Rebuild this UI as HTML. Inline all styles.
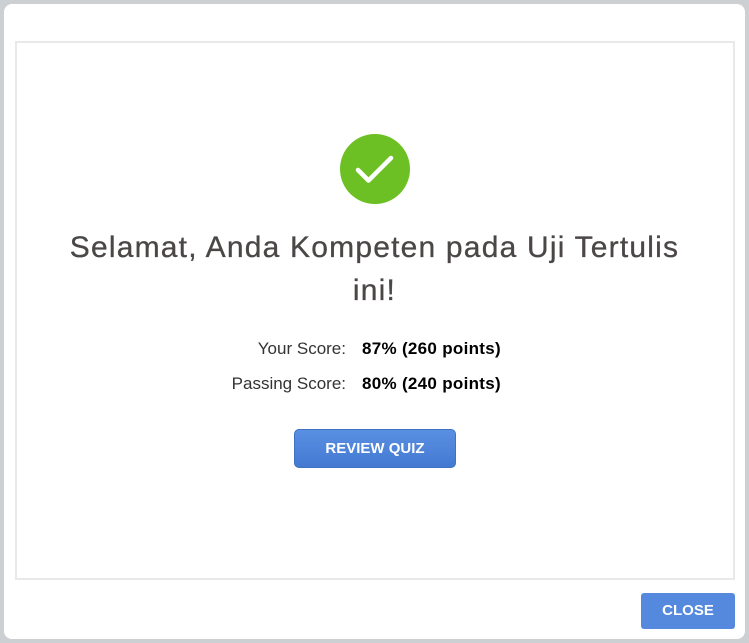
<!DOCTYPE html>
<html><head><style>
html,body{margin:0;padding:0;width:749px;height:643px;background:#cdd0d3;overflow:hidden;font-family:"Liberation Sans",sans-serif}
.card{position:absolute;left:4px;top:4px;width:741px;height:635px;background:#fff;border-radius:8px}
.inner{position:absolute;left:15px;top:41px;width:716px;height:535px;border:2px solid #e9e9e9}
.title{position:absolute;left:40px;width:669px;top:226px;text-align:center;font-size:30px;line-height:43px;color:#4b4746;letter-spacing:1.2px;-webkit-text-stroke:0.3px #4b4746}
.row{position:absolute;left:0;width:749px;font-size:17px;color:#222}
.row .l{position:absolute;right:403px;color:#333}
.row .v{position:absolute;left:362px;font-weight:bold;color:#000;letter-spacing:0.3px}
.btn{position:absolute;left:294px;top:429px;width:160px;height:37px;border:1px solid #3f72c4;border-radius:5px;background:linear-gradient(#5a90e2,#4479d2);color:#fff;font-weight:bold;font-size:15px;text-align:center;line-height:37px;box-sizing:content-box}
.close{position:absolute;left:641px;top:593px;width:94px;height:36px;border-radius:3px;background:#5489dd;color:#fff;font-weight:bold;font-size:15px;text-align:center;line-height:36px}
</style></head><body>
<div class="card"></div>
<div class="inner"></div>
<svg style="position:absolute;left:340px;top:134px" width="70" height="70" viewBox="0 0 70 70"><circle cx="35" cy="35" r="35" fill="#6cc024"/><path d="M18 36 L28.5 46.5 L51 24" fill="none" stroke="#fff" stroke-width="4.5" stroke-linecap="round" stroke-linejoin="round"/></svg>
<div class="title">Selamat, Anda Kompeten pada Uji Tertulis<br>ini!</div>
<div class="row" style="top:339px"><span class="l">Your Score:</span><span class="v">87% (260 points)</span></div>
<div class="row" style="top:374px"><span class="l">Passing Score:</span><span class="v">80% (240 points)</span></div>
<div class="btn">REVIEW QUIZ</div>
<div class="close">CLOSE</div>
</body></html>
